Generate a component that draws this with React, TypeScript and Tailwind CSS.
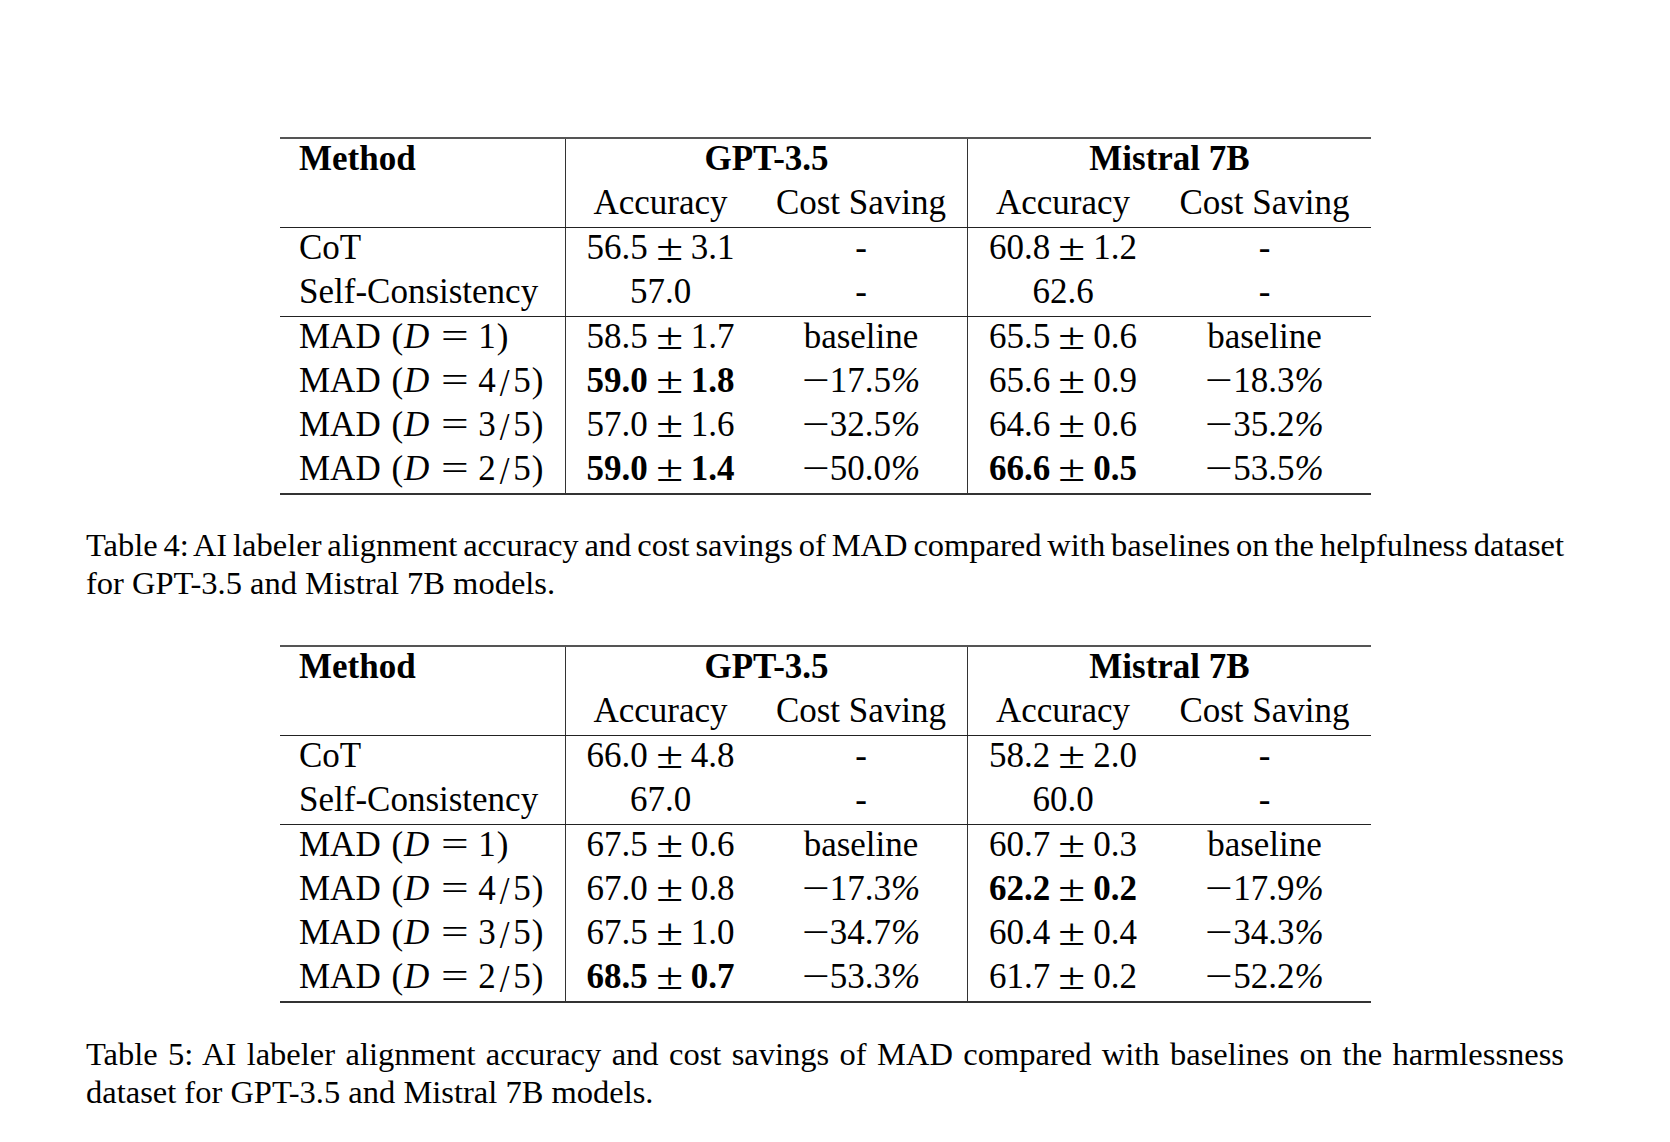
import type { ReactNode } from 'react';

type Acc = { v: string; e?: string; bold?: boolean };
type Row = { method: ReactNode; gpt: Acc; gptCost: string; mis: Acc; misCost: string };

function AccCell({ v, e, bold }: Acc) {
  const w = bold ? 'font-bold' : '';
  if (!e) return <span>{v}</span>;
  return (
    <span className="whitespace-nowrap">
      <span className={w}>{v}</span>
      <span className="inline-block mx-[12px] scale-x-[1.4] scale-y-[1.1]">±</span>
      <span className={w}>{e}</span>
    </span>
  );
}

function CostCell({ v }: { v: string }) {
  if (v === '-' || v === 'baseline') return <span>{v}</span>;
  return (
    <span className="whitespace-nowrap">
      <span className="inline-block origin-left scale-x-[1.4]">−</span>
      <span className="ml-[8px]">{v}</span>
      <span className="italic">%</span>
    </span>
  );
}

function Mad({ d }: { d: string }) {
  const [a, b] = d.split('/');
  return (
    <span className="whitespace-nowrap">
      MAD <span className="ml-[2px]">(</span>
      <span className="italic ml-[1px] mr-[3px]">D</span>
      <span className="inline-block mx-[13px] scale-x-[1.4]">=</span>
      {a}
      {b && (
        <>
          <span className="inline-block mx-[4px] scale-y-[1.15] translate-y-[2px]">/</span>
          {b}
        </>
      )}
      <span className="ml-[1px]">)</span>
    </span>
  );
}

const table4: Row[] = [
  { method: 'CoT', gpt: { v: '56.5', e: '3.1' }, gptCost: '-', mis: { v: '60.8', e: '1.2' }, misCost: '-' },
  { method: 'Self-Consistency', gpt: { v: '57.0' }, gptCost: '-', mis: { v: '62.6' }, misCost: '-' },
  { method: <Mad d="1" />, gpt: { v: '58.5', e: '1.7' }, gptCost: 'baseline', mis: { v: '65.5', e: '0.6' }, misCost: 'baseline' },
  { method: <Mad d="4/5" />, gpt: { v: '59.0', e: '1.8', bold: true }, gptCost: '17.5', mis: { v: '65.6', e: '0.9' }, misCost: '18.3' },
  { method: <Mad d="3/5" />, gpt: { v: '57.0', e: '1.6' }, gptCost: '32.5', mis: { v: '64.6', e: '0.6' }, misCost: '35.2' },
  { method: <Mad d="2/5" />, gpt: { v: '59.0', e: '1.4', bold: true }, gptCost: '50.0', mis: { v: '66.6', e: '0.5', bold: true }, misCost: '53.5' },
];

const table5: Row[] = [
  { method: 'CoT', gpt: { v: '66.0', e: '4.8' }, gptCost: '-', mis: { v: '58.2', e: '2.0' }, misCost: '-' },
  { method: 'Self-Consistency', gpt: { v: '67.0' }, gptCost: '-', mis: { v: '60.0' }, misCost: '-' },
  { method: <Mad d="1" />, gpt: { v: '67.5', e: '0.6' }, gptCost: 'baseline', mis: { v: '60.7', e: '0.3' }, misCost: 'baseline' },
  { method: <Mad d="4/5" />, gpt: { v: '67.0', e: '0.8' }, gptCost: '17.3', mis: { v: '62.2', e: '0.2', bold: true }, misCost: '17.9' },
  { method: <Mad d="3/5" />, gpt: { v: '67.5', e: '1.0' }, gptCost: '34.7', mis: { v: '60.4', e: '0.4' }, misCost: '34.3' },
  { method: <Mad d="2/5" />, gpt: { v: '68.5', e: '0.7', bold: true }, gptCost: '53.3', mis: { v: '61.7', e: '0.2' }, misCost: '52.2' },
];

function BodyRow({ row }: { row: Row }) {
  return (
    <div className="grid grid-cols-[286px_189px_213px_190px_213px] h-[44px] leading-[40px]">
      <div className="pl-[19px] border-r border-[#333]">{row.method}</div>
      <div className="text-center">
        <AccCell {...row.gpt} />
      </div>
      <div className="text-center border-r border-[#333]">
        <CostCell v={row.gptCost} />
      </div>
      <div className="text-center">
        <AccCell {...row.mis} />
      </div>
      <div className="text-center">
        <CostCell v={row.misCost} />
      </div>
    </div>
  );
}

function ResultTable({ rows }: { rows: Row[] }) {
  return (
    <div className="ml-[280px] w-[1091px] text-[35px] border-t-2 border-b-2 border-t-[#555] border-b-[#333]">
      {/* Header */}
      <div className="border-b border-[#222]">
        <div className="grid grid-cols-[286px_189px_213px_190px_213px] h-[44px] leading-[40px] font-bold">
          <div className="pl-[19px] border-r border-[#333]">Method</div>
          <div className="col-span-2 text-center border-r border-[#333]">GPT-3.5</div>
          <div className="col-span-2 text-center">Mistral 7B</div>
        </div>
        <div className="grid grid-cols-[286px_189px_213px_190px_213px] h-[44px] leading-[40px]">
          <div className="border-r border-[#333]" />
          <div className="text-center">Accuracy</div>
          <div className="text-center border-r border-[#333]">Cost Saving</div>
          <div className="text-center">Accuracy</div>
          <div className="text-center">Cost Saving</div>
        </div>
      </div>

      {/* Baselines */}
      <div className="border-b border-[#222]">
        {rows.slice(0, 2).map((r, i) => (
          <BodyRow key={i} row={r} />
        ))}
      </div>

      {/* MAD */}
      <div>
        {rows.slice(2).map((r, i) => (
          <BodyRow key={i} row={r} />
        ))}
      </div>
    </div>
  );
}

function Caption({ first, second }: { first: string; second: string }) {
  return (
    <div className="ml-[86px] w-[1478px] text-[32.5px] leading-[38px]">
      <div className="text-justify [text-align-last:justify] [word-spacing:-3px]">{first}</div>
      <div>{second}</div>
    </div>
  );
}

export default function App() {
  return (
    <div className="w-[1670px] min-h-[1142px] bg-white text-black pt-[137px] font-['Liberation_Serif','Times_New_Roman',serif]">
      <ResultTable rows={table4} />
      <div className="mt-[31px]">
        <Caption
          first="Table 4: AI labeler alignment accuracy and cost savings of MAD compared with baselines on the helpfulness dataset"
          second="for GPT-3.5 and Mistral 7B models."
        />
      </div>

      <div className="mt-[43px]">
        <ResultTable rows={table5} />
      </div>
      <div className="mt-[32px]">
        <Caption
          first="Table 5: AI labeler alignment accuracy and cost savings of MAD compared with baselines on the harmlessness"
          second="dataset for GPT-3.5 and Mistral 7B models."
        />
      </div>
    </div>
  );
}
